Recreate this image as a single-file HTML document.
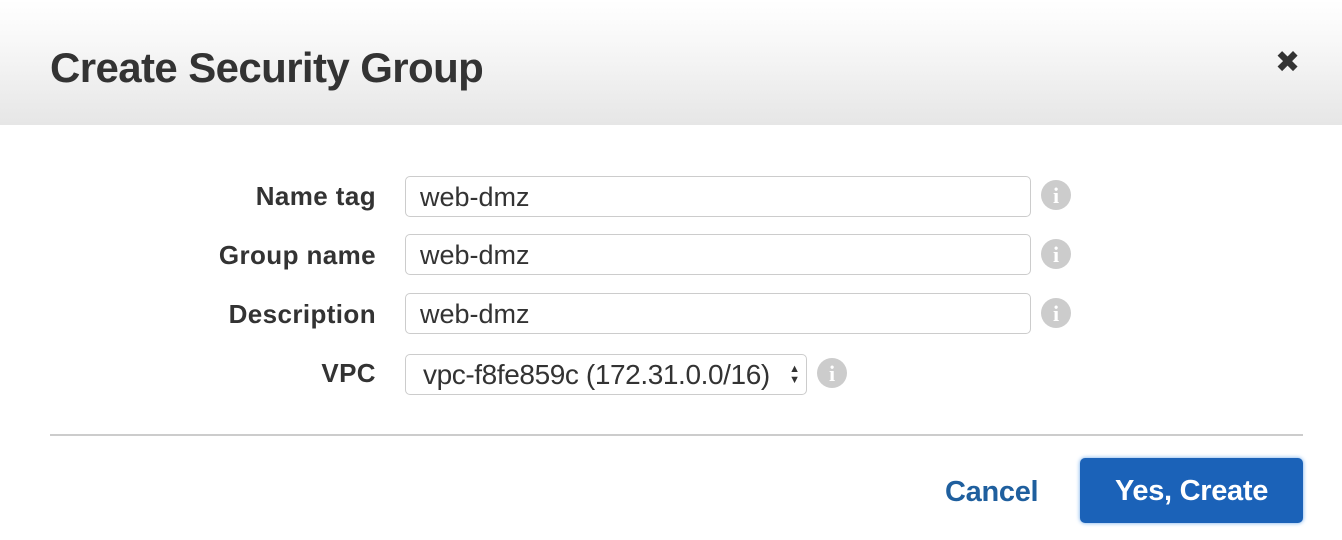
<!DOCTYPE html>
<html><head><style>
body{margin:0;width:1342px;height:540px;background:#fff;font-family:"Liberation Sans",Arial,sans-serif;position:relative;overflow:hidden}
.hdr{position:absolute;left:0;top:0;width:1342px;height:125px;background:linear-gradient(#fff 0%,#f6f6f6 40%,#e6e6e6 100%)}
.title{position:absolute;left:50px;top:44px;font-size:42px;font-weight:bold;color:#333;letter-spacing:-0.6px}
.x{position:absolute;left:1275px;top:45px;font-size:30px;font-weight:bold;color:#333;font-family:"DejaVu Sans",sans-serif}
.lbl{position:absolute;right:966px;font-size:26px;font-weight:bold;color:#333;letter-spacing:0.4px}
.inp{position:absolute;left:405px;width:626px;height:41px;border:1px solid #ccc;border-radius:5px;box-sizing:border-box;font-size:27px;color:#333;padding:5px 0 0 14px;background:#fff}
.info{position:absolute;width:30px;height:30px;border-radius:50%;background:#ccc;color:#fff;font:bold 22px "Liberation Serif",serif;text-align:center;line-height:31px}
.div{position:absolute;left:50px;top:434px;width:1253px;height:2px;background:#ccc}
.cancel{position:absolute;left:945px;top:476px;font-size:29px;font-weight:bold;color:#1f5f9e;letter-spacing:-0.3px}
.btn{position:absolute;left:1080px;top:458px;width:223px;height:65px;background:#1b62b8;border-radius:5px;box-shadow:0 0 4px #6aa6e8;color:#fff;font-size:29px;font-weight:bold;text-align:center;line-height:66px;letter-spacing:-0.3px}
</style></head><body>
<div class="hdr"></div>
<div class="title">Create Security Group</div>
<div class="x">✖</div>
<div class="lbl" style="top:181px">Name tag</div>
<div class="inp" style="top:176px">web-dmz</div>
<div class="info" style="left:1041px;top:180px">i</div>
<div class="lbl" style="top:240px">Group name</div>
<div class="inp" style="top:234px">web-dmz</div>
<div class="info" style="left:1041px;top:239px">i</div>
<div class="lbl" style="top:299px">Description</div>
<div class="inp" style="top:293px">web-dmz</div>
<div class="info" style="left:1041px;top:298px">i</div>
<div class="lbl" style="top:358px">VPC</div>
<div class="inp" style="top:354px;width:402px;padding-left:17px;font-size:28px;letter-spacing:-0.4px;padding-top:4px">vpc-f8fe859c (172.31.0.0/16)<span style="position:absolute;right:6px;top:9px;font-size:11px;line-height:11px;color:#333;letter-spacing:0">▲<br>▼</span></div>
<div class="info" style="left:817px;top:358px">i</div>
<div class="div"></div>
<div class="cancel">Cancel</div>
<div class="btn">Yes, Create</div>
</body></html>
